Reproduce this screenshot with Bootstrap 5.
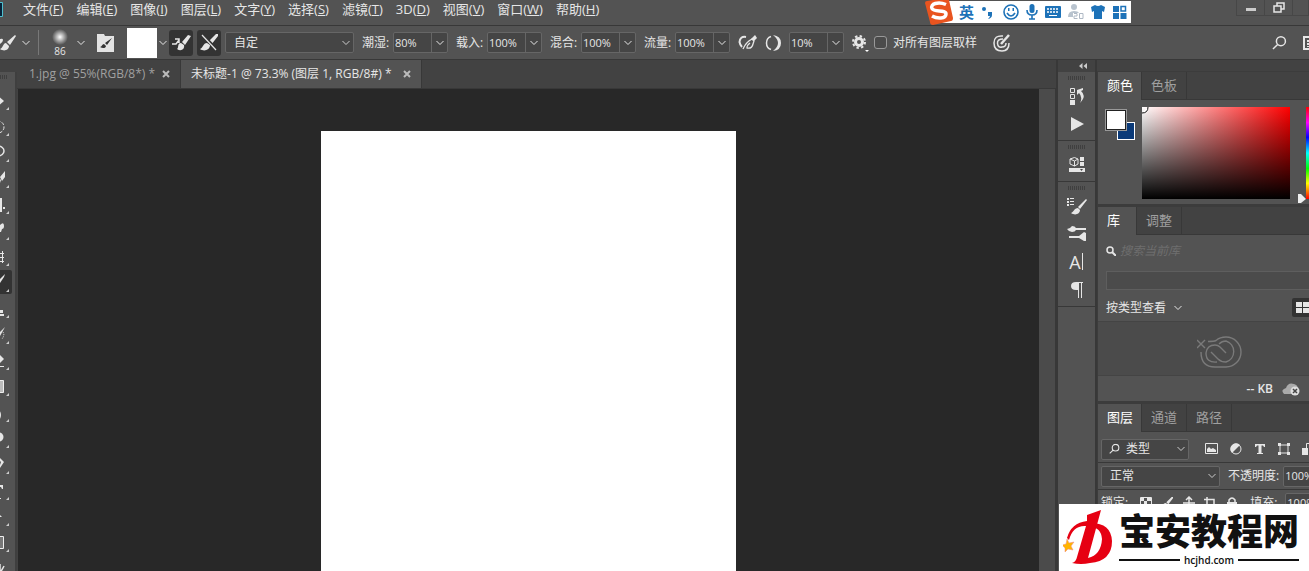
<!DOCTYPE html>
<html lang="zh-CN">
<head>
<meta charset="utf-8">
<meta name="viewport" content="width=device-width, initial-scale=1">
<title>未标题-1</title>
<link href="https://cdn.jsdelivr.net/npm/bootstrap@5.3.0/dist/css/bootstrap.min.css" rel="stylesheet">
<style>
:root{--face:#535353;--deep:#424242;--edge:#383838;--field:#454545;--line:#666;--ink:#e6e6e6;--dim:#a0a0a0}
body{font-family:"Open Sans","Noto Sans CJK SC",sans-serif;font-size:12px;line-height:16px;color:var(--ink);background:var(--deep)}
svg{display:block;flex:none}
button{padding:0;border:0;background:none;color:inherit;display:flex;align-items:center;justify-content:center;flex:none}
.ln{fill:none;stroke:currentColor}
.menu-row{height:26px;background:var(--face);border-bottom:1px solid var(--edge);padding:1px 0 0 23px;gap:13px;font-size:13px}
.menu-row a{color:var(--ink);text-decoration:none;line-height:16px}
.win-btns{height:16px;border:1px solid #474747;border-top:0;margin-top:-1px}
.win-btns button{width:28px;border-right:1px solid #474747}
.win-btns span{width:15px}
.ime{top:1px;right:178px;height:22px;color:#1d72b8;background:#fff;padding-left:20px;padding-right:4px;gap:5px}
.ime b{font-size:15px}
.ime-logo{left:-14px;top:-1px}
.opt-row{height:34px;background:var(--face);border-bottom:1px solid var(--edge)}
.sw{width:30px;height:30px;background:#fff}
.sw-menu{width:12px}
.brush-size{font-size:10px;line-height:12px}
.dark-btn{width:24px;height:26px;background:#333;border-radius:3px;margin-right:4px}
.form-select,.form-select:focus{font-size:12px;line-height:16px;color:var(--ink);background-color:var(--field);border:1px solid var(--line);border-radius:2px;padding:0 16px 0 8px;height:21px;min-height:0;box-shadow:none;
background-image:url("data:image/svg+xml,%3Csvg xmlns='http://www.w3.org/2000/svg' viewBox='0 0 8 8'%3E%3Cpath d='M.5 2 4 5.500 7.500 2' fill='none' stroke='%23ccc'/%3E%3C/svg%3E");background-size:8px 8px;background-position:right 3px center}
.sel-preset{width:129px}.sel-filter{width:88px}.sel-blend{width:119px}
.combo{width:55px;height:21px;background:var(--field);border:1px solid var(--line);border-radius:2px}
.combo input,.combo input:focus{width:38px;min-width:0;border:0;outline:0;background:none;color:var(--ink);font-size:11px;padding:0 0 0 1px}
.combo button{width:16px;border-left:1px solid var(--line);align-self:stretch}
.opt-field{width:94px}
.opt-field label{width:31px;white-space:nowrap}
.tick{appearance:none;width:13px;height:13px;border:1px solid #999;border-radius:3px;background:#4b4b4b;margin:0 6px 0 0}
.tool-strip{width:17px;padding-right:4px;border-right:2px solid #3f3f3f;background:var(--face);gap:2px;margin-top:12px;overflow:hidden}
.grip{height:4px;background:repeating-linear-gradient(90deg,#3f3f3f 0 1px,var(--face) 1px 2px)}
.tool-strip .grip{width:8px;margin:3px 0 7px}
.tool-strip button{width:12px;height:24px;justify-content:start}
.tool-strip button.on{background:#333;border-radius:0 2px 2px 0}
.doc-tabs{height:29px;border-bottom:1px solid var(--edge)}
.doc-tab{padding:0 10px 0 8px;border-right:1px solid var(--edge);color:var(--dim);gap:7px;white-space:nowrap}
.doc-tab button{color:#bbb}
.doc-tab.on{background:var(--face);color:var(--ink);padding:0 10px;gap:11px}
.doc-tab a{color:inherit;text-decoration:none}
.pasteboard{background:#282828;padding-top:42px;margin-left:1px}
.page-sheet{width:41%;max-width:415px;background:#fff}
.vscroll{width:17px;background:#4b4b4b;border-right:1px solid var(--edge)}
.dock{width:41px;background:var(--face);border-left:2px solid var(--edge);border-right:2px solid var(--edge)}
.dock-head{height:12px;background:var(--deep)}
.dock-set{border-bottom:1px solid var(--edge);padding:4px 0 2px}
.dock-set .grip{width:18px;margin:0 auto 2px}
.dock-set button{width:100%;height:28px}
.char-btn{font-size:18px}
.panels{width:212px;padding-top:11px}
.panel-tabs{height:28px;background:var(--deep);border-bottom:1px solid var(--edge);font-size:13px}
.panel-tabs a{padding:4px 9px 0;border-right:1px solid var(--edge);color:var(--dim);text-decoration:none;line-height:18px}
.panel-tabs a.on{background:var(--face);color:#fff;margin-bottom:-1px;padding-right:8px}
.panel-box{background:var(--face);border:1px solid #3c3c3c;border-width:1px 0 2px 1px;overflow:hidden}
.color-body{height:104px;padding-top:7px}
.chips{width:36px;height:32px;margin:3px 0 0 8px}
.chip-a{width:20px;height:20px;background:#fff;border:1px solid #222;outline:1px solid #999;left:0;top:0}
.chip-b{width:18px;height:18px;background:#0b3a78;border:1px solid #fff;left:11px;top:12px}
.ramp{width:148px;height:92px;background:linear-gradient(0deg,#000,transparent),linear-gradient(90deg,#fff,#f00)}
.hue{width:20px;height:92px;background:linear-gradient(#f00,#f0f 17%,#00f 33%,#0ff 50%,#0f0 67%,#ff0 83%,#f00)}
.lib-search input{border:0;outline:0;background:none;width:150px;font-size:12px;font-style:italic;padding:0;color:var(--ink)}
.lib-search input::placeholder{color:#6e6e6e;opacity:1}
.lib-pick{height:19px;background:#4b4b4b;border:1px solid #5e5e5e;border-right:0;margin-left:8px}
.cc-well{height:55px;background:#4b4b4b;border:1px solid #444;border-width:1px 0}
.cc-foot{height:25px}
.grid-btn{width:22px;height:19px;background:#333;border-radius:2px;margin-right:-5px}
.layer-line{padding:3px 0 3px 3px;border-bottom:1px solid var(--edge);height:27px;white-space:nowrap}
.stamp{width:250px;height:67px;background:#fff;color:#111;padding:4px 10px 0 4px;gap:6px}
.stamp-name{font-size:36px;line-height:42px;font-weight:900;font-family:"Noto Sans CJK SC",sans-serif;white-space:nowrap}
.stamp-url{font-size:10px;line-height:12px;font-weight:600}
.stamp-url i{height:2px;background:#111}
</style>
<script src="https://cdn.jsdelivr.net/npm/bootstrap@5.3.0/dist/js/bootstrap.bundle.min.js"></script>
</head>
<body class="vh-100 overflow-hidden d-flex flex-column position-relative">
<svg width="0" height="0" class="position-absolute"><defs>
<symbol id="chev" viewBox="0 0 8 8"><path class="ln" d="M.5 2 4 5.500 7.500 2"/></symbol>
<symbol id="brush" viewBox="0 0 18 18"><path fill="currentColor" d="M18 0 16 0 8 8l3 3 7-9zM7 9c-4 0-4 5-7 6 4 3 10 1 10-4z"/></symbol>
<symbol id="close" viewBox="0 0 8 8"><path class="ln" stroke-width="2" d="m1 1 6 6M7 1 1 7"/></symbol>
<symbol id="lens" viewBox="0 0 16 16"><g class="ln" stroke-width="1.600"><circle cx="9.500" cy="6" r="4.800"/><path d="M6 9.500 1 14.500"/></g></symbol>
<symbol id="tri" viewBox="0 0 12 24"><path fill="#ccc" d="M9 19v3H6z"/></symbol>
</defs></svg>

<nav class="menu-row d-flex align-items-start flex-shrink-0 position-relative">
<svg class="position-absolute start-0 top-0" width="3" height="18"><path d="M0 2.500h2.500v14H0" fill="#06233a" stroke="#4fc0cf"/></svg>
<a href="#">文件(<u>F</u>)</a><a href="#">编辑(<u>E</u>)</a><a href="#">图像(<u>I</u>)</a><a href="#">图层(<u>L</u>)</a><a href="#">文字(<u>Y</u>)</a><a href="#">选择(<u>S</u>)</a><a href="#">滤镜(<u>T</u>)</a><a href="#">3D(<u>D</u>)</a><a href="#">视图(<u>V</u>)</a><a href="#">窗口(<u>W</u>)</a><a href="#">帮助(<u>H</u>)</a>
<div class="win-btns d-flex ms-auto"><button aria-label="最小化"><svg width="12" height="12"><path d="M1 6h10v3H1z" fill="#ccc"/></svg></button><button aria-label="还原"><svg width="14" height="14"><path class="ln" stroke-width="1.500" d="M5 5V2h7v6H9M2 5h7v6H2z"/></svg></button><span></span></div>
<div class="ime position-absolute d-flex align-items-center">
<svg class="ime-logo position-absolute" width="28" height="25" viewBox="0 0 28 25"><path d="M0 3Q0 1 2 1L21-2q3 0 3 2l4 18q0 3-2 3L8 25q-3 0-3-3z" fill="#e9541f"/><path d="M21 4.500C13 1 5 4 7 8.500c2 4 14 1 14 5.500 0 5-9 5-14 2" fill="none" stroke="#fff" stroke-width="3.500"/></svg>
<b>英</b>
<svg width="18" height="18" fill="currentColor"><circle cx="5" cy="6" r="2"/><path d="M9 9h4v3q0 3-4 4 2-2 2-3H9z"/></svg>
<svg width="18" height="18"><g class="ln" stroke-width="1.600"><circle cx="9" cy="9" r="7"/><path d="M5 10q4 6 8 0"/></g><path d="M6 5h1.500v3H6zm4.500 0H12v3h-1.500z" fill="currentColor"/></svg>
<svg width="14" height="18"><rect x="4.500" y="1" width="5" height="9" rx="2.500" fill="currentColor"/><path class="ln" stroke-width="1.600" d="M2 7q0 5 5 5t5-5M7 12v4M4 16h6"/></svg>
<svg width="18" height="18"><rect x="1" y="3" width="16" height="12" rx="1" fill="currentColor"/><path d="M3 6h12M3 9h12" stroke="#fff" stroke-width="1.500" stroke-dasharray="2 1"/><path d="M5 12.500h8" stroke="#fff"/></svg>
<svg width="18" height="18" fill="#b8c3ce"><circle cx="7" cy="4" r="3"/><path d="M1 14q0-6 6-6 4 0 5 2H6v4z"/><path d="M7 10.500h3v2.500H7v2.500h3.500M12.500 10.500H16v5h-3.500z" fill="none" stroke="#aeb8c4"/></svg>
<svg width="16" height="18"><path fill="currentColor" d="M1 4 5 2q3 2 6 0l4 2-1 5-2-1v8H4V8L2 9z"/></svg>
<svg width="16" height="18" fill="currentColor"><path d="M2 3h6v6H2zM2 10h6v6H2zM9.500 10h6v6h-6z"/><path class="ln" stroke-width="1.500" d="M10 3.500h4.500V8H10z"/></svg>
</div>
</nav>

<header class="opt-row d-flex align-items-center flex-shrink-0">
<button aria-label="画笔工具"><svg width="18" height="18"><path fill="currentColor" d="M15 1 7 8l3 3 6-9zM6 9c-3 0-3 5-6 6 4 3 9 1 9-3zM0 5q3-1 3 1 0 2-3 4z"/></svg></button>
<button class="px-1" aria-label="预设"><svg width="8" height="8"><use href="#chev"/></svg></button>
<span class="vr mx-1 my-1"></span>
<div class="text-center ms-2"><svg width="18" height="16" class="mx-auto"><defs><radialGradient id="dot"><stop stop-color="#fff"/><stop offset="1" stop-color="#fff" stop-opacity="0"/></radialGradient></defs><circle cx="9" cy="8" r="8" fill="url(#dot)"/></svg><span class="brush-size d-block">86</span></div>
<button class="ms-1 px-1" aria-label="画笔大小"><svg width="8" height="8"><use href="#chev"/></svg></button>
<button class="ms-1 px-1" aria-label="画笔面板"><svg width="18" height="18"><path fill="#e3e3e3" d="M0 0h7l1 2h9v16H0z"/><path fill="#333" d="M15 4 8 9l2 2zM7 10c-2 0-2 3-4 3 3 2 6 1 6-1z"/></svg></button>
<span class="sw ms-2"></span>
<button class="sw-menu" aria-label="载入画笔"><svg width="8" height="8"><use href="#chev"/></svg></button>
<button class="dark-btn" aria-label="每次描边后载入画笔"><svg width="20" height="18"><path fill="currentColor" d="M17 1 11 8l3 3 6-9zM10 9c-4 0-2 5-4 6 4 3 8 0 7-4z"/><path class="ln" stroke-width="1.500" d="M1 10h4l3-4M4 5h4v4"/></svg></button>
<button class="dark-btn" aria-label="每次描边后清理画笔"><svg width="18" height="18"><use href="#brush"/><path d="m3 1 14 15" stroke="#333" stroke-width="3"/><path class="ln" stroke-width="1.200" d="m2 1 14 15"/></svg></button>
<select class="form-select sel-preset" aria-label="混合画笔组合"><option>自定</option></select>
<div class="opt-field d-flex align-items-center ms-2"><label for="wet">潮湿:</label><div class="combo d-flex"><input id="wet" value="80%"><button aria-label="潮湿选项"><svg width="8" height="8"><use href="#chev"/></svg></button></div></div>
<div class="opt-field d-flex align-items-center"><label for="load">载入:</label><div class="combo d-flex"><input id="load" value="100%"><button aria-label="载入选项"><svg width="8" height="8"><use href="#chev"/></svg></button></div></div>
<div class="opt-field d-flex align-items-center"><label for="mix">混合:</label><div class="combo d-flex"><input id="mix" value="100%"><button aria-label="混合选项"><svg width="8" height="8"><use href="#chev"/></svg></button></div></div>
<div class="opt-field d-flex align-items-center"><label for="flow">流量:</label><div class="combo d-flex"><input id="flow" value="100%"><button aria-label="流量选项"><svg width="8" height="8"><use href="#chev"/></svg></button></div></div>
<button aria-label="喷枪"><svg width="19" height="16"><path class="ln" stroke-width="2" d="M8 2Q2 1 1.500 7 2 10 4 12"/><path class="ln" stroke-width="1.300" d="M5 14Q8 7 14 4l2 2-1 3q-1 5-6 4 0-3 3-5"/><path fill="currentColor" d="m13 4 4-4 2 3-3 3z"/></svg></button>
<button class="ms-1 px-1" aria-label="平滑"><svg width="16" height="16"><path class="ln" stroke-width="1.500" d="M6 1.500Q1.500 3 1.500 8T6 14.500"/><path fill="currentColor" d="M8 0q8 1 8 8t-8 8q5-4 5-8T8 0z"/></svg></button>
<div class="combo d-flex ms-1"><input aria-label="平滑度" value="10%"><button aria-label="平滑度选项"><svg width="8" height="8"><use href="#chev"/></svg></button></div>
<button class="ms-2" aria-label="设置"><svg width="18" height="20"><circle class="ln" cx="7" cy="9" r="3.500" stroke-width="3"/><circle class="ln" cx="7" cy="9" r="6" stroke-width="2" stroke-dasharray="2.400 2.300"/><path fill="#fff" d="M13 17h4l-2 2z"/></svg></button>
<input class="tick ms-1" type="checkbox" id="all"><label for="all">对所有图层取样</label>
<button class="ms-3" aria-label="压力"><svg width="18" height="18"><path class="ln" stroke-width="1.500" d="M10 2Q1 1 1 9t8 8q7 0 7-8M10 5Q4 5 4.500 9.500T9 13q4 0 4-4"/><path class="ln" stroke-width="2.500" d="m8 10 8-9"/></svg></button>
<button class="ms-auto me-3" aria-label="搜索"><svg width="15" height="16" viewBox="0 0 16 16"><use href="#lens"/></svg></button>
<button aria-label="工作区"><svg width="6" height="14"><path class="ln" stroke-width="2" d="M7 1H1v12h6"/><path class="ln" stroke-dasharray="2 1" stroke-width="2" d="M5 4v7"/></svg></button>
</header>

<main class="d-flex flex-grow-1 overflow-hidden">
<aside class="tool-strip d-flex flex-column flex-shrink-0">
<div class="grip flex-shrink-0"></div>
<button aria-label="移动"><svg width="12" height="24"><path fill="currentColor" d="M0 9.500 4 13l-4 3.500z"/><use href="#tri"/></svg></button>
<button aria-label="选框"><svg width="12" height="24"><circle class="ln" cx="-2" cy="13" r="6" stroke-dasharray="3 1.500"/><use href="#tri"/></svg></button>
<button aria-label="套索"><svg width="12" height="24"><ellipse class="ln" cx="-2" cy="11" rx="6" ry="5" stroke-width="1.500"/><use href="#tri"/></svg></button>
<button aria-label="快速选择"><svg width="12" height="24"><path fill="currentColor" d="M5 5 0 11l2 4 3-4zM0 13l1 1-1 3z"/><use href="#tri"/></svg></button>
<button aria-label="裁剪"><svg width="12" height="24"><path fill="currentColor" d="M0 6h2v14H0zm3 9h2v2H3z"/><use href="#tri"/></svg></button>
<button aria-label="吸管"><svg width="12" height="24"><path fill="currentColor" d="M0 7q4-4 4 1 0 3-2 3l-1 3H0z"/><use href="#tri"/></svg></button>
<button aria-label="修补"><svg width="12" height="24"><path class="ln" d="M0 9.500h4M0 13.500h4M0 17.500h4M2.500 7v12"/><use href="#tri"/></svg></button>
<button class="on" aria-label="混合器画笔"><svg width="12" height="24"><path fill="currentColor" d="M5 4 0 9v4l4-6z"/><use href="#tri"/></svg></button>
<button aria-label="图章"><svg width="12" height="24"><path fill="currentColor" d="M0 14h3v3H0zM0 18h4v2H0z"/><use href="#tri"/></svg></button>
<button aria-label="历史画笔"><svg width="12" height="24"><path fill="currentColor" d="m5 5-5 5v4z"/><path class="ln" stroke-dasharray="1 1" d="M3 10q2 3-1 7"/><use href="#tri"/></svg></button>
<button aria-label="橡皮擦"><svg width="12" height="24"><path fill="currentColor" d="m0 7 4 4-4 4zM0 18h4v1H0z"/><use href="#tri"/></svg></button>
<button aria-label="渐变"><svg width="12" height="24"><path fill="#bbb" stroke="#eee" d="M-1 6.500h4.500v12H-1z"/><use href="#tri"/></svg></button>
<button aria-label="模糊"><svg width="12" height="24"><ellipse fill="currentColor" cx="-2" cy="15" rx="3" ry="5"/><use href="#tri"/></svg></button>
<button aria-label="减淡"><svg width="12" height="24"><circle fill="currentColor" cx="-1" cy="11" r="4.500"/><use href="#tri"/></svg></button>
<button aria-label="钢笔"><svg width="12" height="24"><path fill="currentColor" d="m0 6 4 4-4 6v-3l1-3-1-1z"/><use href="#tri"/></svg></button>
<button aria-label="文字"><svg width="12" height="24"><path fill="currentColor" d="M0 7h3v4H2L1 9H0zM0 20h1v1H0z"/><use href="#tri"/></svg></button>
<button aria-label="路径选择"><svg width="12" height="24"><path fill="currentColor" d="m0 11 2 2H0z"/><use href="#tri"/></svg></button>
<button aria-label="矩形"><svg width="12" height="24"><path fill="#777" stroke="#eee" d="M-1 6.500h4.500v12H-1z"/><use href="#tri"/></svg></button>
<button aria-label="抓手"><svg width="12" height="24"><path class="ln" stroke-width="1.500" d="M0 8v9l3-5 1-2"/></svg></button>
</aside>

<section class="d-flex flex-column flex-grow-1">
<div class="doc-tabs d-flex flex-shrink-0">
<div class="doc-tab d-flex align-items-center ms-1"><a href="#">1.jpg @ 55%(RGB/8*) *</a><button aria-label="关闭"><svg width="8" height="8"><use href="#close"/></svg></button></div>
<div class="doc-tab on d-flex align-items-center"><a href="#">未标题-1 @ 73.3% (图层 1, RGB/8#) *</a><button aria-label="关闭"><svg width="8" height="8"><use href="#close"/></svg></button></div>
</div>
<div class="d-flex flex-grow-1"><div class="pasteboard flex-grow-1 d-flex"><div class="page-sheet mx-auto"></div></div><div class="vscroll"></div></div>
</section>

<aside class="dock flex-shrink-0">
<div class="dock-head d-flex justify-content-end pe-2"><button aria-label="展开"><svg width="8" height="6"><path fill="#ccc" d="M3.500 0v6L0 3zM8 0v6L4.500 3z"/></svg></button></div>
<div class="dock-set"><div class="grip"></div>
<button aria-label="历史记录"><svg width="16" height="18"><path class="ln" d="M1.500 1.500h4v4h-4zM1.500 7.500h4v4h-4z"/><path fill="currentColor" d="M1 13h5v5H1zM8 3l6-2v2l-2 1q6 5-1 12 3-6-1-10L8 8z"/></svg></button>
<button aria-label="动作"><svg width="16" height="16"><path fill="currentColor" d="M2 1v14l13-7z"/></svg></button></div>
<div class="dock-set"><div class="grip"></div>
<button aria-label="属性"><svg width="16" height="18"><path class="ln" d="M5.500 1.500 9 3v5l-3.500 2L1 8V3zM1 3l4.500 2L9 3M5.500 5v5"/><path fill="currentColor" d="M11 1h4v4h-4zM11 6h4v4h-4zM0 12h16v4H0z"/><path fill="#444" d="M11 13h3l-1.500 2z"/></svg></button></div>
<div class="dock-set"><div class="grip"></div>
<button aria-label="画笔设置"><svg width="22" height="18"><path fill="currentColor" d="M20 2l-8 8 2 2 7-9zM12 11c-4 0-4 4-7 5 4 3 9 1 9-3z"/><path class="ln" stroke-width="2" stroke-dasharray="2 1" d="M2 1v9"/><path class="ln" d="M4 1.500h4M4 4.500h4M4 7.500h4"/></svg></button>
<button aria-label="画笔"><svg width="20" height="16"><path fill="currentColor" d="M0 3q3 0 5-3 3 0 4 2h10v2H9Q8 6 5 6 2 6 0 3zM2 10h10l5-4 2 1v8h-2l-5-3H2z"/></svg></button>
<button class="char-btn" aria-label="字符">A<svg width="3" height="18"><path class="ln" d="M1.500 0v17"/></svg></button>
<button aria-label="段落"><svg width="12" height="16"><path fill="currentColor" d="M5 0h7v1h-1v15h-1V1H8v15H7V8H5Q0 8 0 4t5-4z"/></svg></button></div>
</aside>

<aside class="panels flex-shrink-0 overflow-hidden">
<div class="panel-box">
<div class="panel-tabs d-flex"><a class="on" href="#">颜色</a><a href="#">色板</a></div>
<div class="color-body d-flex">
<div class="chips position-relative flex-shrink-0"><span class="chip-b position-absolute"></span><span class="chip-a position-absolute"></span></div>
<div class="ramp flex-shrink-0"><svg width="8" height="8"><path d="M6 0Q6 6 0 6" fill="#fff" stroke="#111"/></svg></div>
<svg class="align-self-end ms-1 ps-1" width="12" height="10"><path fill="#eee" d="M0 0h3l5 5-5 4H0z"/></svg><div class="hue flex-shrink-0"></div>
</div></div>

<div class="panel-box">
<div class="panel-tabs d-flex"><a class="on pe-3" href="#">库</a><a href="#">调整</a></div>
<div class="lib-search d-flex align-items-center ps-2 pt-2 gap-1"><svg width="10" height="10"><circle class="ln" cx="4" cy="4" r="3" stroke-width="1.500"/><path class="ln" stroke-width="2" d="m6 6 4 4"/></svg><input aria-label="搜索库" placeholder="搜索当前库"></div>
<div class="pt-1"><div class="lib-pick mt-2"></div></div>
<div class="d-flex align-items-center ps-2 pt-2 pb-1 justify-content-between"><button class="gap-2">按类型查看<svg width="8" height="8"><use href="#chev"/></svg></button><button class="grid-btn" aria-label="网格视图"><svg width="14" height="14" fill="currentColor"><path d="M0 1h6v5H0zM7 1h6v5H7zM0 7h6v5H0zM7 7h6v5H7z"/></svg></button></div>
<div class="cc-well d-flex align-items-center justify-content-center ps-4"><svg class="ms-2 mt-2" width="46" height="33" viewBox="0 0 46 33"><g fill="none" stroke="#7a7a7a" stroke-width="1.400"><path d="m0 4 8 8M8 4l-8 8M11 5.500q6 0 8-1Q23 1 29 1a15 15 0 0 1 0 30H18Q4 31 4 16M20 26q-11 1-11-9Q10 9 18 9q3 0 5 2l6 6M22 8q3-3 7-3a11 11 0 0 1 0 21q-5 0-8-3l-7-7"/></g></svg></div>
<div class="cc-foot d-flex align-items-center justify-content-end gap-2 pe-2"><span class="fw-semibold">-- KB</span><svg width="20" height="14"><path fill="#aaa" d="M3 12q-4-4 2-6 2-6 8-4 4 1 4 5v5z"/><circle cx="14" cy="9" r="4.500" fill="#ddd"/><path stroke="#444" stroke-width="1.500" d="m12 7 4 4M16 7l-4 4"/></svg></div>
</div>

<div class="panel-box">
<div class="panel-tabs d-flex"><a class="on" href="#">图层</a><a href="#">通道</a><a href="#">路径</a></div>
<div class="layer-line d-flex align-items-center mt-1">
<div class="position-relative flex-shrink-0"><select class="form-select sel-filter ps-4" aria-label="滤镜类型"><option>类型</option></select><svg class="position-absolute top-50 start-0 translate-middle-y ms-2" width="11" height="11" viewBox="0 0 16 16"><use href="#lens"/></svg></div>
<div class="d-flex align-items-center gap-2 ms-3">
<button class="me-1" aria-label="像素"><svg width="13" height="12"><path class="ln" d="M.5.500h12v10H.5z"/><path fill="currentColor" d="M2 9V6l2-2 2 2 2-1 3 2v2z"/></svg></button>
<button class="me-1" aria-label="调整"><svg width="12" height="12"><circle class="ln" cx="6" cy="6" r="5"/><path fill="currentColor" d="M10 2 2 10A5 5 0 0 1 10 2z"/></svg></button>
<button class="me-1" aria-label="文字"><svg width="12" height="12"><path fill="currentColor" d="M1 1h10v3h-1L9 2.500H7.500V10H9v1H3v-1h1.500V2.500H3L2 4H1z"/></svg></button>
<button class="me-1" aria-label="形状"><svg width="12" height="12"><path class="ln" d="M2 2h8v8H2z"/><path fill="currentColor" d="M0 0h3v3H0zM9 0h3v3H9zM0 9h3v3H0zM9 9h3v3H9z"/></svg></button>
<button aria-label="智能对象"><svg width="12" height="12"><path class="ln" d="M4.500 6V.5H10V6"/><path fill="currentColor" d="M0 5h6v7H0z"/></svg></button></div></div>
<div class="layer-line d-flex align-items-center"><select class="form-select sel-blend flex-shrink-0" aria-label="混合模式"><option>正常</option></select><label for="opa" class="ms-2 me-1">不透明度:</label><div class="combo d-flex flex-shrink-0"><input id="opa" value="100%"></div></div>
<div class="layer-line d-flex align-items-center gap-2"><span>锁定:</span>
<svg class="ms-1" width="12" height="12"><path class="ln" d="M.5.500h11v11H.5z"/><path fill="currentColor" d="M1 1h3v3H1zM7 1h4v3H7zM4 4h3v3H4z"/></svg><svg width="14" height="12" viewBox="0 0 18 18"><use href="#brush"/></svg><svg width="14" height="14"><path class="ln" stroke-width="1.500" d="M7 1v12M1 7h12M4 4l3-3 3 3"/></svg><svg width="14" height="12"><path class="ln" stroke-width="1.500" d="M0 2.500h10V12M3 0v9h11"/></svg><svg width="12" height="12"><path class="ln" stroke-width="1.500" d="M3 6V3q3-4 6 0v3"/><path fill="currentColor" d="M1 5h10v7H1z"/></svg>
<label for="fil" class="ms-1">填充:</label><div class="combo d-flex flex-shrink-0"><input id="fil" value="100%"></div></div>
</div>
</aside>
</main>

<div class="stamp position-absolute bottom-0 end-0 d-flex">
<svg width="50" height="60" viewBox="0 0 50 60"><path fill="#e60012" d="M24 7 38 2 25 50q13-3 14-19Q38 19 27 19l1-4q20 0 21 18 0 20-22 22-9 2-18 0 4-1 5-6l9-31Q10 17 6 32l-2-2q4-15 20-17z"/><path fill="#ffb400" stroke="#e88" stroke-width=".5" d="m4 31 2 4 5-1-3 4 2 4-5-1-3 3v-4l-3-3 4-1z"/></svg>
<div class="flex-grow-1"><div class="stamp-name">宝安教程网</div><div class="stamp-url d-flex align-items-center gap-1 mt-1"><i class="flex-grow-1"></i>hcjhd.com<i class="flex-grow-1"></i></div></div>
</div>
</body>
</html>
